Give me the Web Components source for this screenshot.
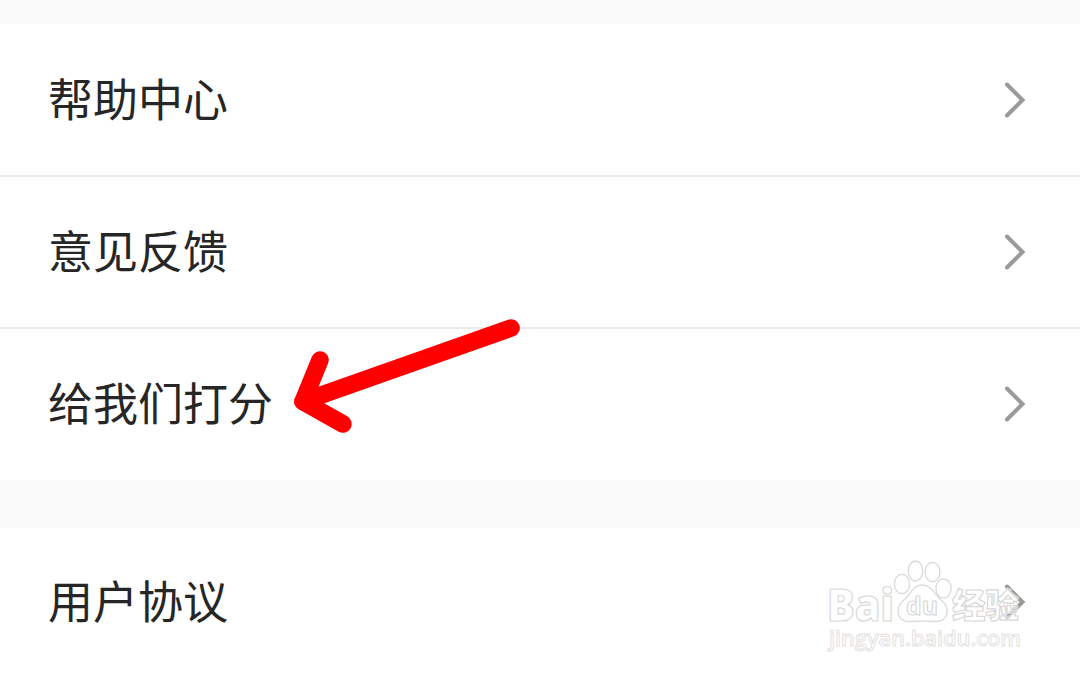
<!DOCTYPE html>
<html lang="zh-CN">
<head>
<meta charset="utf-8">
<title>设置</title>
<style>
    body {
        margin: 0;
        background-color: #fff;
        font-family: "Noto Sans CJK SC", sans-serif;
        color: #262626;
    }
</style>
</head>
<body>
<settings-page>
    <settings-group>
        <settings-row>帮助中心</settings-row>
        <settings-row size="150px">意见反馈</settings-row>
        <settings-row size="150px">给我们打分</settings-row>
    </settings-group>
    <settings-group>
        <settings-row size="148px">用户协议</settings-row>
    </settings-group>
    <hint-arrow slot="overlay"></hint-arrow>
    <site-watermark slot="overlay"></site-watermark>
</settings-page>

<script>
class SettingsPage extends HTMLElement {
    constructor(){
        super();
        this.attachShadow({mode: 'open'}).innerHTML = `
            <style>
                :host{
                    position: relative;
                    display: flex;
                    flex-direction: column;
                    gap: 48px;
                    box-sizing: border-box;
                    width: 1080px;
                    height: 676px;
                    padding-top: 24px;
                    overflow: hidden;
                    background-color: #fafafa;
                }
            </style>
            <slot></slot>
            <slot name="overlay"></slot>
        `
    }
}

class SettingsGroup extends HTMLElement {
    constructor(){
        super();
        this.attachShadow({mode: 'open'}).innerHTML = `
            <style>
                :host{
                    display: flex;
                    flex-direction: column;
                    flex: none;
                    padding-bottom: 1px;
                    background-color: #fff;
                }
                ::slotted(:not(:last-child)){
                    border-bottom: 2px solid #ebebeb;
                }
            </style>
            <slot></slot>
        `
    }
}

class SettingsRow extends HTMLElement {
    get size(){ return this.getAttribute('size') || '151px' }
    set size(val){ val ? this.setAttribute('size', val) : false; }

    constructor(){
        super();
        this.attachShadow({mode: 'open'}).innerHTML = `
            <style>
                :host{
                    display: flex;
                    align-items: center;
                    justify-content: space-between;
                    height: ${this.size};
                    padding: 0 52px 0 48px;
                    font-size: 45px;
                    line-height: 66px;
                }
                span{ padding-bottom: 4px; }
                svg{
                    display: block;
                    width: 26px;
                    height: 40px;
                }
            </style>
            <span><slot></slot></span>
            <svg viewBox="0 0 26 40" fill="none" stroke="#999" stroke-width="4" stroke-linecap="round">
                <path d="M5 4.5 L20.5 20 L5 35.5"/>
            </svg>
        `
    }
}

class HintArrow extends HTMLElement {
    constructor(){
        super();
        this.attachShadow({mode: 'open'}).innerHTML = `
            <style>
                :host{
                    position: absolute;
                    left: 280px;
                    top: 310px;
                }
                svg{ display: block; }
            </style>
            <svg width="250" height="130" viewBox="0 0 250 130" fill="none" stroke="#fe0000" stroke-width="17.6" stroke-linecap="round" stroke-linejoin="round">
                <path d="M231 18 L23 91.5"/>
                <path d="M40 50 L23 91.5 L63 114"/>
            </svg>
        `
    }
}

class SiteWatermark extends HTMLElement {
    constructor(){
        super();
        this.attachShadow({mode: 'open'}).innerHTML = `
            <style>
                :host{
                    position: absolute;
                    left: 820px;
                    top: 550px;
                }
                svg{ display: block; }
                text{
                    stroke: #d8d8d8;
                    stroke-width: 1.2px;
                    stroke-linejoin: round;
                    fill: #fff;
                    fill-opacity: .6;
                }
                .latin{ font-family: "Open Sans", sans-serif; font-weight: 800; }
                .cjk{ font-family: "Noto Sans CJK SC", sans-serif; font-weight: 900; }
                .url{ font-family: "Open Sans", sans-serif; font-weight: 600; stroke: #e2e2e2; stroke-width: 1px; }
            </style>
            <svg width="220" height="110" viewBox="0 0 220 110">
                <text class="latin" x="7" y="71" font-size="44" textLength="67" lengthAdjust="spacingAndGlyphs">Bai</text>
                <g fill="#fff" stroke="#dadada" stroke-width="1.3">
                    <ellipse cx="82" cy="34" rx="7.6" ry="9.7"/>
                    <ellipse cx="95.5" cy="21" rx="7.2" ry="10"/>
                    <ellipse cx="112.5" cy="22" rx="7.5" ry="9.7"/>
                    <ellipse cx="123.5" cy="38.5" rx="7.6" ry="9.6"/>
                    <path d="M102 35 C111 35 114 43 120 49 C125 53 127 57 127 61 C127 68 122 71.5 115 71.5 C108 71 97 71 90 71.5 C83 72 78 68 78 61 C78 56 81 52 85 49 C91 43 94 35 102 35 Z"/>
                </g>
                <text class="latin" x="86" y="65" font-size="25" textLength="32" lengthAdjust="spacingAndGlyphs" style="font-weight: 700">du</text>
                <text class="cjk" x="132" y="68" font-size="34" textLength="67" lengthAdjust="spacingAndGlyphs">经验</text>
                <text class="url" x="9" y="96" font-size="22" textLength="192" lengthAdjust="spacingAndGlyphs">jingyan.baidu.com</text>
            </svg>
        `
    }
}

window.customElements.define('settings-page', SettingsPage)
window.customElements.define('settings-group', SettingsGroup)
window.customElements.define('settings-row', SettingsRow)
window.customElements.define('hint-arrow', HintArrow)
window.customElements.define('site-watermark', SiteWatermark)
</script>
</body>
</html>
